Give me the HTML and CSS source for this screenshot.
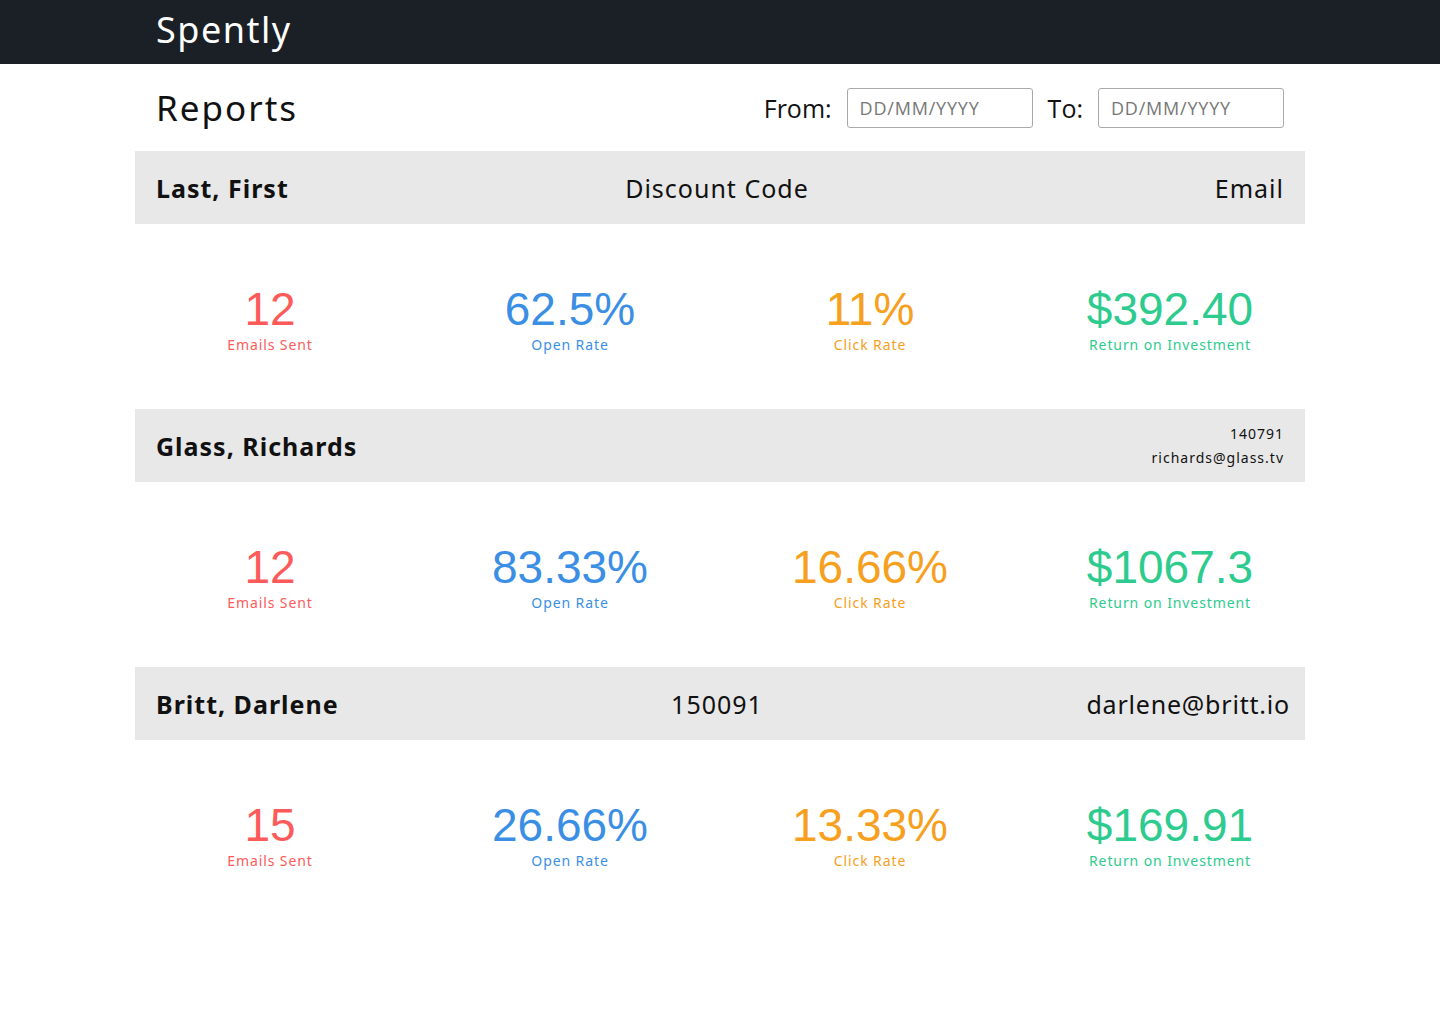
FILE: index.html
```html
<!DOCTYPE html>
<html lang="en">
<head>
<meta charset="utf-8">
<title>Spently – Reports</title>
<link rel="stylesheet" href="styles.css">
</head>
<body>
<header class="topbar">
  <div class="container">
    <div class="brand">Spently</div>
  </div>
</header>
<main class="container">
  <div class="reports-head">
    <h1 class="title">Reports</h1>
    <div class="range">
      <label class="range-label">From:</label>
      <input class="date" type="text" placeholder="DD/MM/YYYY">
      <label class="range-label">To:</label>
      <input class="date" type="text" placeholder="DD/MM/YYYY">
    </div>
  </div>

  <div class="person">
    <div class="name">Last, First</div>
    <div class="code">Discount Code</div>
    <div class="email">Email</div>
  </div>
  <div class="stats">
    <div class="stat red"><div class="num">12</div><div class="lbl">Emails Sent</div></div>
    <div class="stat blue"><div class="num">62.5%</div><div class="lbl">Open Rate</div></div>
    <div class="stat orange"><div class="num">11%</div><div class="lbl">Click Rate</div></div>
    <div class="stat green"><div class="num">$392.40</div><div class="lbl">Return on Investment</div></div>
  </div>

  <div class="person">
    <div class="name">Glass, Richards</div>
    <div class="code"></div>
    <div class="email small"><div>140791</div><div>richards@glass.tv</div></div>
  </div>
  <div class="stats">
    <div class="stat red"><div class="num">12</div><div class="lbl">Emails Sent</div></div>
    <div class="stat blue"><div class="num">83.33%</div><div class="lbl">Open Rate</div></div>
    <div class="stat orange"><div class="num">16.66%</div><div class="lbl">Click Rate</div></div>
    <div class="stat green"><div class="num">$1067.3</div><div class="lbl">Return on Investment</div></div>
  </div>

  <div class="person">
    <div class="name">Britt, Darlene</div>
    <div class="code">150091</div>
    <div class="email wide">darlene@britt.io</div>
  </div>
  <div class="stats">
    <div class="stat red"><div class="num">15</div><div class="lbl">Emails Sent</div></div>
    <div class="stat blue"><div class="num">26.66%</div><div class="lbl">Open Rate</div></div>
    <div class="stat orange"><div class="num">13.33%</div><div class="lbl">Click Rate</div></div>
    <div class="stat green"><div class="num">$169.91</div><div class="lbl">Return on Investment</div></div>
  </div>
</main>
</body>
</html>
```

FILE: styles.css
```css
* { box-sizing: border-box; }
html, body { margin: 0; padding: 0; }
body {
  background: #ffffff;
  color: #111;
  font-family: "Noto Sans", "Open Sans", sans-serif;
}
.container {
  width: 1170px;
  margin: 0 auto;
}
.topbar {
  background: #1b1f26;
  height: 64px;
}
.brand {
  color: #fff;
  font-size: 36px;
  line-height: 60px;
  padding-left: 21px;
  letter-spacing: 1.5px;
}
.reports-head {
  height: 87px;
  display: flex;
  align-items: center;
  justify-content: space-between;
  padding: 0 21px;
}
.title {
  margin: 0;
  font-weight: 400;
  font-size: 35px;
  letter-spacing: 2px;
}
.range {
  display: flex;
  align-items: center;
}
.range-label {
  font-family: "Open Sans", sans-serif;
  font-size: 25px;
  letter-spacing: 0;
  margin-right: 15px;
}
.range-label.to { margin-right: 15px; }
.date {
  width: 186px;
  height: 40px;
  border: 1px solid #a9a9a9;
  border-radius: 3px;
  padding: 0 12px;
  font-family: "Open Sans", sans-serif;
  font-size: 18px;
  letter-spacing: 0.8px;
  color: #333;
  margin-right: 15px;
}
.date:last-child { margin-right: 0; }
.date::placeholder { color: #777; }
.person {
  background: #e8e8e8;
  height: 73px;
  display: grid;
  grid-template-columns: 1fr 1fr 1fr;
  align-items: center;
  padding: 0 21px;
  font-size: 25px;
  letter-spacing: 1px;
}
.name { font-weight: 700; }
.code { text-align: center; margin-left: -6px; }
.email { text-align: right; }
.email.small { font-size: 14px; line-height: 24px; letter-spacing: 1px; }
.email.wide { margin-right: -6px; letter-spacing: 0.8px; }
.stats {
  margin: 0 -15px;
  height: 185px;
  display: grid;
  grid-template-columns: repeat(4, 1fr);
  align-items: center;
  text-align: center;
}
.stat { padding-top: 8px; }
.num {
  font-family: "Liberation Sans", Arial, sans-serif;
  font-size: 46px;
  line-height: 46px;
  letter-spacing: 0;
}
.lbl {
  margin-top: 3px;
  font-size: 14px;
  line-height: 20px;
  letter-spacing: 0.9px;
}
.red { color: #fd5a5a; }
.blue { color: #3a8fe4; }
.orange { color: #f6a01e; }
.green { color: #2dcb8e; }
```
